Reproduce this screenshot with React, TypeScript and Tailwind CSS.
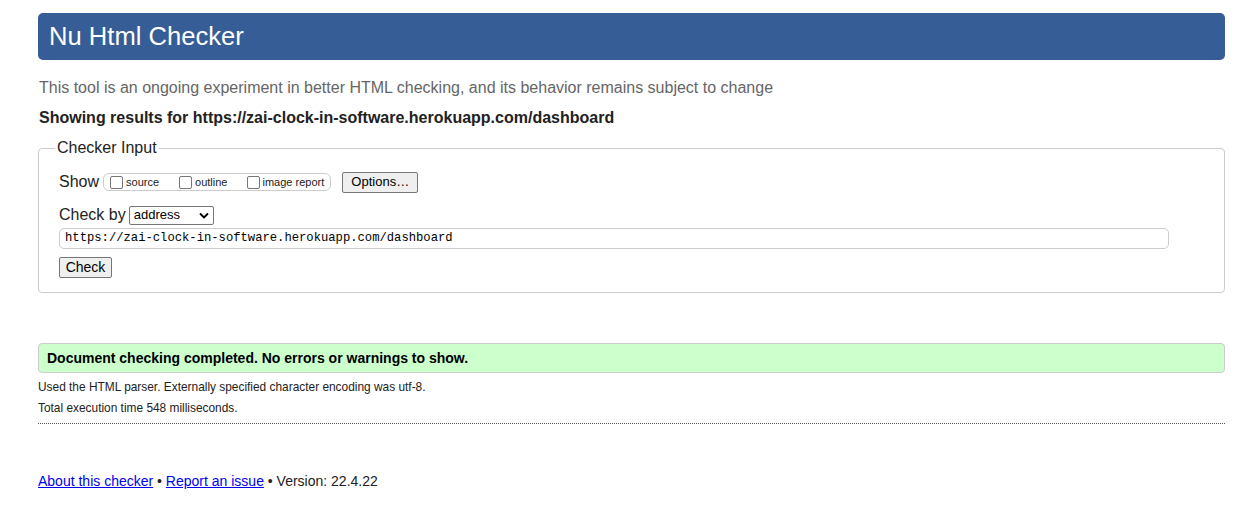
import React from "react";

export default function App() {
  return (
    <div className="min-h-[531px] bg-white pl-[38px] pr-[22px] pt-[13px] text-[#222]" style={{ fontFamily: '"Liberation Sans", Arial, sans-serif' }}>
      <h1 className="flex h-[47px] items-center rounded-[5px] bg-[#365d95] pl-[11px] text-[25.6px] leading-none text-white">Nu Html Checker</h1>
      <p className="mt-[18px] pl-px text-[16px] leading-[20px] text-[#666]">This tool is an ongoing experiment in better HTML checking, and its behavior remains subject to change</p>
      <p className="mt-[10px] pl-px text-[16px] font-bold leading-[20px] text-[#222]">Showing results for https://zai-clock-in-software.herokuapp.com/dashboard</p>
      <fieldset className="mt-[11px] h-[154px] rounded-[4px] border border-[#ccc] pl-[20px] pr-[55px]">
        <legend className="ml-[-4px] px-[2px] text-[16px] leading-[18px] text-[#222]">Checker Input</legend>
        <div className="mt-[14px] flex h-[22px] items-center">
          <span className="text-[16px]">Show</span>
          <span className="ml-[4px] flex h-[18px] items-center rounded-[6px] border border-[#ccc] pl-[6px] pr-[6px] text-[11px]">
            <span className="inline-block h-[13px] w-[13px] rounded-[2px] border border-[#767676]" />
            <span className="ml-[3px]">source</span>
            <span className="ml-[20px] inline-block h-[13px] w-[13px] rounded-[2px] border border-[#767676]" />
            <span className="ml-[3px]">outline</span>
            <span className="ml-[20px] inline-block h-[13px] w-[13px] rounded-[2px] border border-[#767676]" />
            <span className="ml-[2px]">image report</span>
          </span>
          <span className="ml-[11px] flex h-[21px] w-[76px] items-center justify-center rounded-[2px] border border-[#767676] bg-[#efefef] text-[13px] text-black">Options…</span>
        </div>
        <div className="mt-[12px] flex h-[20px] items-center">
          <span className="text-[16px]">Check by</span>
          <span className="ml-[3px] flex h-[19px] w-[85px] items-center justify-between rounded-[2px] border border-[#767676] pl-[4px] pr-[4px] text-[13px] text-black">
            address
            <svg width="10" height="7" viewBox="0 0 10 7"><path d="M1 1.5 L5 5.5 L9 1.5" fill="none" stroke="#000" strokeWidth="1.8" /></svg>
          </span>
        </div>
        <div className="mt-[3px] flex h-[21px] items-center rounded-[5px] border border-[#ccc] pl-[5px] text-[12.2px] text-black" style={{ fontFamily: '"Liberation Mono", "DejaVu Sans Mono", monospace' }}>https://zai-clock-in-software.herokuapp.com/dashboard</div>
        <span className="mt-[8px] flex h-[21px] w-[53px] items-center justify-center rounded-[2px] border border-[#767676] bg-[#efefef] text-[14px] text-black">Check</span>
      </fieldset>
      <div className="mt-[50px] flex h-[30px] items-center rounded-[4px] border border-[#ccc] bg-[#ccffcc] pl-[8px] text-[14px] font-bold text-black">Document checking completed. No errors or warnings to show.</div>
      <p className="mt-[7px] text-[11.9px] leading-[14px] text-[#222]">Used the HTML parser. Externally specified character encoding was utf-8.</p>
      <p className="mt-[7px] text-[11.9px] leading-[14px] text-[#222]">Total execution time 548 milliseconds.</p>
      <div className="mt-[8px] border-t border-dotted border-[#555]" />
      <p className="mt-[49px] text-[14px] leading-[16px] text-[#222]">
        <a className="text-[#0000ee] underline" href="#">About this checker</a> • <a className="text-[#0000ee] underline" href="#">Report an issue</a> • Version: 22.4.22
      </p>
    </div>
  );
}
